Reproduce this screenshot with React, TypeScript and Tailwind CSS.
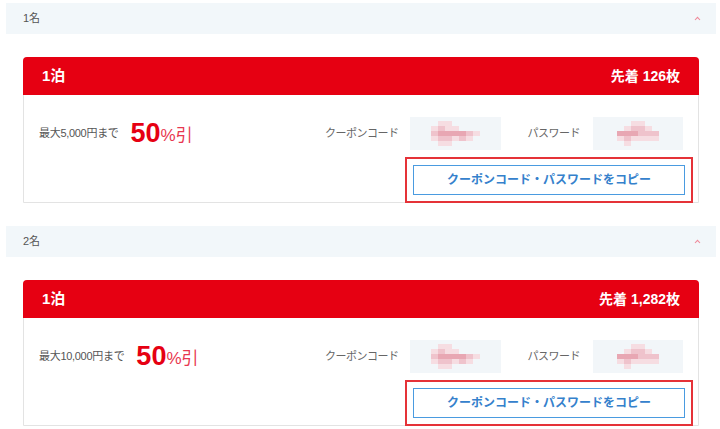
import React from "react";

type Coupon = {
  rank: string;
  nights: string;
  stock: string;
  limit: string;
};

const coupons: Coupon[] = [
  { rank: "1名", nights: "1泊", stock: "先着 126枚", limit: "最大5,000円まで" },
  { rank: "2名", nights: "1泊", stock: "先着 1,282枚", limit: "最大10,000円まで" },
];

// pixelated (blurred-out) value
const shades = ["bg-transparent", "bg-[#f6dde2]", "bg-[#efc3cc]", "bg-[#e8a7b3]"];

function Mosaic({ pattern }: { pattern: number[][] }) {
  return (
    <div className="flex flex-col">
      {pattern.map((row, i) => (
        <div key={i} className="flex">
          {row.map((c, j) => (
            <div key={j} className={`w-[7px] h-[5px] ${shades[c]}`} />
          ))}
        </div>
      ))}
    </div>
  );
}

const codePattern = [
  [0, 1, 1, 0, 0, 0, 0],
  [1, 2, 1, 1, 0, 0, 0],
  [2, 3, 3, 3, 3, 2, 1],
  [1, 2, 2, 1, 2, 1, 0],
  [0, 1, 1, 0, 0, 0, 0],
];

const passPattern = [
  [0, 0, 1, 1, 0, 0],
  [0, 1, 2, 2, 1, 0],
  [3, 3, 3, 2, 2, 2],
  [1, 2, 1, 1, 1, 1],
  [0, 1, 0, 0, 0, 0],
];

function ChevronUp() {
  return (
    <svg width="7" height="5" viewBox="0 0 7 5" fill="none">
      <path d="M1 4 L3.5 1.3 L6 4" stroke="#ef8a9a" strokeWidth="1.1" />
    </svg>
  );
}

function CouponCard({ c }: { c: Coupon }) {
  return (
    <div className="mx-[17px] mt-[23px] border border-[#e3e3e3] rounded-t-[4px]">
      <div className="bg-[#e60012] h-[38px] -mx-px -mt-px rounded-t-[4px] flex items-center justify-between pl-[19px] pr-[19px] text-white font-bold text-[14px]">
        <span className="text-[15px]">{c.nights}</span>
        <span>{c.stock}</span>
      </div>
      <div className="pt-[22px]">
        <div className="flex items-center h-[33px] pl-[15px] pr-[15px]">
          <span className="text-[11px] tracking-[-0.3px] text-[#555]">{c.limit}</span>
          <span className="ml-[12px] text-[#e60012] font-bold text-[27px] leading-none">50</span>
          <span className="text-[#e8374f] text-[17px] leading-none mt-[4px]">%引</span>
          <div className="ml-auto flex items-center">
            <span className="text-[11px] tracking-[-0.5px] text-[#666]">クーポンコード</span>
            <div className="ml-[11px] w-[91px] h-[33px] bg-[#f2f6f9] flex items-center justify-center">
              <Mosaic pattern={codePattern} />
            </div>
            <span className="ml-[27px] text-[11px] tracking-[-0.5px] text-[#666]">パスワード</span>
            <div className="ml-[13px] w-[90px] h-[33px] bg-[#f2f6f9] flex items-center justify-center">
              <Mosaic pattern={passPattern} />
            </div>
          </div>
        </div>
        <div className="flex justify-end pr-[5px] mt-[7px] -mb-px relative">
          <div className="border-2 border-[#e53238] p-[6px]">
            <button className="w-[272px] h-[30px] border border-[#4a9be0] bg-white text-[#3581cc] font-bold text-[12px]">
              クーポンコード・パスワードをコピー
            </button>
          </div>
        </div>
      </div>
    </div>
  );
}

export default function App() {
  return (
    <div
      className="bg-white w-[720px] h-[429px] overflow-hidden pt-[3px] pl-[6px] pr-[4px]"
      style={{ fontFamily: '"Liberation Sans", "Noto Sans CJK JP", sans-serif' }}
    >
      {coupons.map((c, i) => (
        <div key={i} className={i > 0 ? "mt-[23px]" : ""}>
          <div className="h-[31px] bg-[#f2f7fa] flex items-center justify-between pl-[17px] pr-[15px] text-[11px] text-[#555]">
            <span>{c.rank}</span>
            <ChevronUp />
          </div>
          <CouponCard c={c} />
        </div>
      ))}
    </div>
  );
}
